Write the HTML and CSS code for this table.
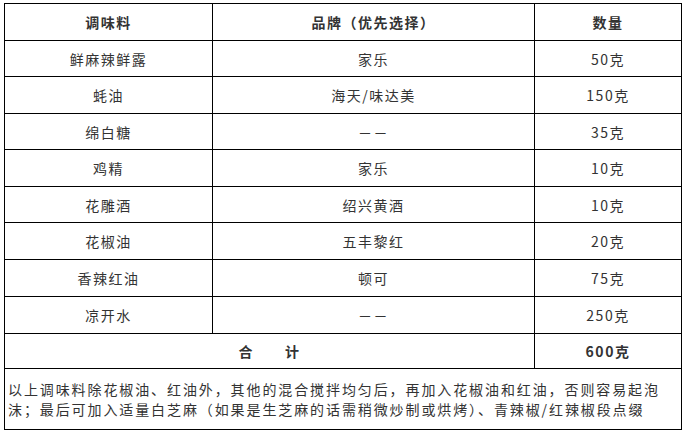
FILE: index.html
```html
<!DOCTYPE html>
<html lang="zh">
<head>
<meta charset="utf-8">
<link rel="stylesheet" href="styles.css">
</head>
<body>
<table class="recipe">
  <colgroup>
    <col class="c1"><col class="c2"><col class="c3">
  </colgroup>
  <thead>
    <tr class="head"><th>调味料</th><th>品牌（优先选择）</th><th>数量</th></tr>
  </thead>
  <tbody>
    <tr class="r36"><td>鲜麻辣鲜露</td><td>家乐</td><td>50克</td></tr>
    <tr class="r37"><td>蚝油</td><td>海天/味达美</td><td>150克</td></tr>
    <tr class="r36"><td>绵白糖</td><td>－－</td><td>35克</td></tr>
    <tr class="r37"><td>鸡精</td><td>家乐</td><td>10克</td></tr>
    <tr class="r36"><td>花雕酒</td><td>绍兴黄酒</td><td>10克</td></tr>
    <tr class="r37"><td>花椒油</td><td>五丰黎红</td><td>20克</td></tr>
    <tr class="r37"><td>香辣红油</td><td>顿可</td><td>75克</td></tr>
    <tr class="r37"><td>凉开水</td><td>－－</td><td>250克</td></tr>
    <tr class="total"><td colspan="2" class="bold sum">合　　计</td><td class="bold">600克</td></tr>
    <tr class="note"><td colspan="3">以上调味料除花椒油、红油外，其他的混合搅拌均匀后，再加入花椒油和红油，否则容易起泡<br>沫；最后可加入适量白芝麻（如果是生芝麻的话需稍微炒制或烘烤）、青辣椒/红辣椒段点缀</td></tr>
  </tbody>
</table>
</body>
</html>
```
FILE: styles.css
```css
html, body {
  margin: 0;
  padding: 0;
  background: #fff;
}
body {
  padding: 3px 0 0 4px;
  font-family: "Noto Sans CJK SC", "Noto Sans", sans-serif;
  color: #333;
}
.recipe {
  border-collapse: collapse;
  width: 677px;
  table-layout: fixed;
  font-size: 14px;
}
.c1 { width: 208px; }
.c2 { width: 322px; }
.c3 { width: 147px; }
.recipe th, .recipe td {
  border: 1px solid #000;
  padding: 0;
  text-align: center;
  vertical-align: middle;
  letter-spacing: 1.5px;
  line-height: 20px;
}
.recipe th {
  font-weight: bold;
}
.head { height: 37px; }
.r36 { height: 36px; }
.r37 { height: 37px; }
.total { height: 35px; }
.bold { font-weight: bold; }
.sum { letter-spacing: 3px; }
.note { height: 61px; }
.note td {
  text-align: left;
  padding: 0 0 0 3px;
  letter-spacing: 1.9px;
  line-height: 20px;
}
```
